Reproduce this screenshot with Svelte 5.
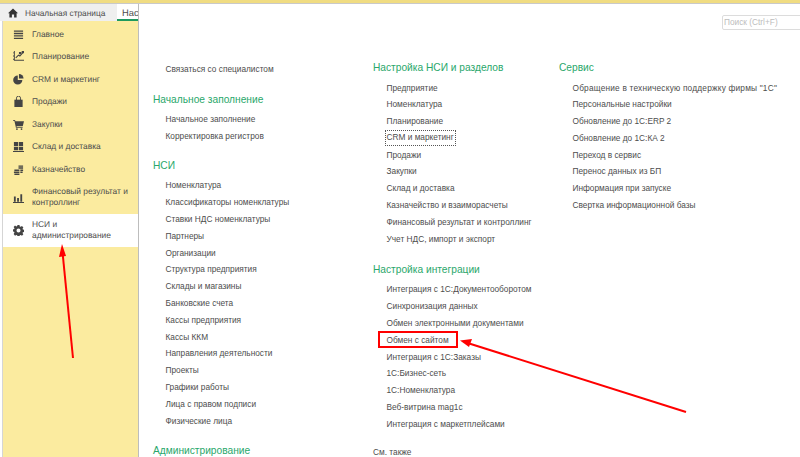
<script>
const menu = [
  { name: 'Главное', icon: 'lines' },
  { name: 'Планирование', icon: 'plan' },
  { name: 'CRM и маркетинг', icon: 'pie' },
  { name: 'Продажи', icon: 'bag' },
  { name: 'Закупки', icon: 'cart' },
  { name: 'Склад и доставка', icon: 'grid' },
  { name: 'Казначейство', icon: 'coins' },
  { name: 'Финансовый результат и контроллинг', icon: 'bars', tall: true },
  { name: 'НСИ и администрирование', icon: 'gear', active: true }
];

const col1 = [
  { items: ['Связаться со специалистом'] },
  { title: 'Начальное заполнение', items: ['Начальное заполнение', 'Корректировка регистров'] },
  { title: 'НСИ', items: ['Номенклатура', 'Классификаторы номенклатуры', 'Ставки НДС номенклатуры', 'Партнеры', 'Организации', 'Структура предприятия', 'Склады и магазины', 'Банковские счета', 'Кассы предприятия', 'Кассы ККМ', 'Направления деятельности', 'Проекты', 'Графики работы', 'Лица с правом подписи', 'Физические лица'] },
  { title: 'Администрирование', items: [] }
];
const col2 = [
  { title: 'Настройка НСИ и разделов', items: ['Предприятие', 'Номенклатура', 'Планирование', 'CRM и маркетинг', 'Продажи', 'Закупки', 'Склад и доставка', 'Казначейство и взаиморасчеты', 'Финансовый результат и контроллинг', 'Учет НДС, импорт и экспорт'] },
  { title: 'Настройка интеграции', items: ['Интеграция с 1С:Документооборотом', 'Синхронизация данных', 'Обмен электронными документами', 'Обмен с сайтом', 'Интеграция с 1С:Заказы', '1С:Бизнес-сеть', '1С:Номенклатура', 'Веб-витрина mag1c', 'Интеграция с маркетплейсами'] }
];
const col3 = [
  { title: 'Сервис', items: ['Обращение в техническую поддержку фирмы "1С"', 'Персональные настройки', 'Обновление до 1С:ERP 2', 'Обновление до 1С:КА 2', 'Переход в сервис', 'Перенос данных из БП', 'Информация при запуске', 'Свертка информационной базы'] }
];
const columns = [
  { cls: 'c1', groups: col1 },
  { cls: 'c2', groups: col2 },
  { cls: 'c3', groups: col3 }
];
</script>

<div class="page">
  <div class="topline"></div>
  <div class="body">
    <div class="left">
      <div class="tabs">
        <div class="home">
          <svg width="10" height="10" viewBox="0 0 10 10"><path d="M5 .6 0 5.2h1.4V9.6h2.5V6.4h2.2v3.2h2.5V5.2H10z" fill="#333"/></svg>
          <span>Начальная страница</span>
        </div>
        <div class="tab"><span>Нас</span></div>
      </div>
      <nav class="side">
        {#each menu as m}
          <div class="mi" class:tall={m.tall} class:active={m.active}>
            <svg class="ico" width="11" height="11" viewBox="0 0 12 12" fill="#444">
              {#if m.icon == 'lines'}
                <path d="M1 1.5h10v1.4H1zM1 4.2h10v1.4H1zM1 6.9h10v1.4H1zM1 9.6h10V11H1z"/>
              {:else if m.icon == 'plan'}
                <path d="M2 0v9.5h10v1H1v-1H0v-1h1V6H0V5h1V2.5H0v-1h1V0z"/><path d="M3 7.5 6 4.5l1.5 1L10.5 2" fill="none" stroke="#444" stroke-width="1.2"/><path d="M6.5 1h2.500v2.500h-2.500zM9.500 0h2.500v2.500h-2.500z"/>
              {:else if m.icon == 'pie'}
                <path d="M5.200 1.500a5 5 0 1 0 5 5h-5z"/><path d="M6.500 0a5 5 0 0 1 5 5h-5z"/>
              {:else if m.icon == 'bag'}
                <path d="M1.500 4h9v8h-9z"/><path d="M3.800 5V2.300a2.200 2.200 0 0 1 4.400 0V5" fill="none" stroke="#444"/>
              {:else if m.icon == 'cart'}
                <path d="M0 1h2.200l.4 1.500H12l-1.300 5H3.800l.3 1h6.400v1H3.200L1.500 2H0z"/><circle cx="4.300" cy="11" r="1"/><circle cx="9.300" cy="11" r="1"/>
              {:else if m.icon == 'grid'}
                <path d="M1 1h4.600v4.400H1zM6.400 1H11v4.400H6.400zM1 6.200h4.600v4H1zM6.400 6.200H11v4H6.400zM0 11h12v1H0z"/>
              {:else if m.icon == 'coins'}
                <path d="M6 1.500h5v1.500H6zM6 3.600h5v1.500H6zM1.500 6h5.500v1.600H1.500zM1 8.200h6v1.500H1zM1.500 10.300h5.500V12H1.500zM8 6h3v1.500H8zM8 8.200h2.500v1.500H8z"/>
              {:else if m.icon == 'bars'}
                <path d="M1 5h2v5.500H1zM4.500 6.500h2v4h-2zM8 2.500h2v8H8zM0 11h12v1H0z"/>
              {:else}
                <path fill-rule="evenodd" d="M4.900 0h2.200l.3 1.600 1 .4 1.400-.9 1.500 1.500-.9 1.400.4 1 1.600.3v2.200l-1.600.3-.4 1 .9 1.400-1.500 1.500-1.400-.9-1 .4-.3 1.600H4.900l-.3-1.600-1-.4-1.400.9L.7 9.700l.9-1.400-.4-1L-.4 7V4.800l1.600-.3.4-1-.9-1.400L2.200.6l1.400.9 1-.4zM6 3.700a2.200 2.200 0 1 0 0 4.400 2.200 2.200 0 0 0 0-4.400z"/>
              {/if}
            </svg>
            <span>{m.name}</span>
          </div>
        {/each}
      </nav>
    </div>

    <main class="panel">
      <div class="search">Поиск (Ctrl+F)</div>
      {#each columns as col}
        <section class="col {col.cls}">
          {#each col.groups as g}
            <div class="group">
              {#if g.title}<h3>{g.title}</h3>{/if}
              {#each g.items as it}
                <div class="link" class:focus={it == 'CRM и маркетинг'} class:wide={it.startsWith('Обращение')}>{it}</div>
              {/each}
            </div>
          {/each}
          {#if col.cls == 'c2'}<div class="also">См. также</div>{/if}
        </section>
      {/each}
    </main>
  </div>

  <!-- red annotations drawn over the screenshot -->
  <svg class="marks" width="800" height="457" viewBox="0 0 800 457">
    <rect x="379" y="332" width="78" height="15" fill="none" stroke="#f00" stroke-width="2"/>
    <path d="M73 358 62.500 252" stroke="#f00" stroke-width="2" fill="none"/>
    <path d="M62 244 59 257 66 256z" fill="#f00"/>
    <path d="M686 412 466 342.500" stroke="#f00" stroke-width="2" fill="none"/>
    <path d="M460 340.500 472 339 469 347z" fill="#f00"/>
  </svg>
</div>

<style>
:global(body) {
  margin: 0;
  background: #fff;
}
.page {
  position: relative;
  width: 800px;
  height: 457px;
  overflow: hidden;
  font-family: "Liberation Sans", Arial, sans-serif;
  font-size: 8.300px;
  color: #4d4d4d;
  background: #fff;
}
.topline {
  height: 4px;
  background: #f0dc82;
  border-bottom: 1px solid #c9c9c9;
  box-sizing: border-box;
}
.body {
  display: flex;
  height: 453px;
}
.left {
  width: 138px;
  flex: none;
  display: flex;
  flex-direction: column;
  background: #fff;
  padding-left: 2px;
  box-sizing: border-box;
}
.tabs {
  height: 17px;
  flex: none;
  display: flex;
  background: #efefef;
  margin-left: -2px;
}
.home {
  width: 117px;
  flex: none;
  display: flex;
  align-items: center;
  gap: 7px;
  padding-left: 8px;
  box-sizing: border-box;
  white-space: nowrap;
  font-size: 8.300px;
  text-rendering: geometricPrecision;
}
.tab {
  flex: 1;
  background: #fff;
  padding: 3px 0 0 5px;
  overflow: hidden;
  white-space: nowrap;
  border-bottom: 2px solid #1e9a5e;
  box-sizing: border-box;
  height: 17px;
  font-size: 9.400px;
  text-rendering: geometricPrecision;
}
.side {
  flex: 1;
  background: #fbeb9f;
  display: flex;
  flex-direction: column;
  padding-top: 2px;
  border-left: 1px solid #d5d5d5;
}
.mi {
  display: flex;
  align-items: center;
  height: 22.500px;
  padding: 0 4px 0 9.500px;
  flex: none;
  line-height: 11px;
  font-size: 8.400px;
  text-rendering: geometricPrecision;
}
.mi.tall {
  height: 33px;
}
.mi.active {
  height: 33px;
  background: #fff;
}
.ico {
  flex: none;
  margin-right: 8.500px;
}
.panel {
  flex: 1;
  position: relative;
  background: #fff;
  display: grid;
  grid-template-columns: 221px 186px 1fr;
  padding-left: 13px;
  min-width: 0;
  border-left: 1px solid #bdbdbd;
}
.search {
  position: absolute;
  left: 583px;
  top: 11px;
  width: 90px;
  height: 15px;
  box-sizing: border-box;
  border: 1px solid #dcdcdc;
  border-radius: 2px;
  padding: 1px 0 0 1px;
  color: #bdbdbd;
  font-size: 8.300px;
}
.col {
  display: flex;
  flex-direction: column;
}
.c1 {
  padding-top: 57px;
}
.c2, .c3 {
  padding-top: 56px;
}
.group {
  padding-bottom: 14.500px;
}
.c1 .group {
  padding-bottom: 14px;
}
h3 {
  margin: 0 0 3.500px;
  font-size: 10.200px;
  font-weight: 400;
  line-height: 16px;
  color: #2aa76b;
}
.c1 h3 {
  margin: 0 0 3px 1px;
}
.link {
  height: 16.800px;
  line-height: 16.800px;
  margin-left: 13.500px;
  white-space: nowrap;
}
.focus {
  width: 68px;
  height: 14px;
  line-height: 13px;
  margin: 1.400px 0 1.400px 12.500px;
  padding-left: 1px;
  outline: 1px dotted #555;
}
.wide {
  letter-spacing: 0.200px;
}
.also {
  margin-top: 0;
}
.marks {
  position: absolute;
  left: 0;
  top: 0;
  pointer-events: none;
}
</style>
